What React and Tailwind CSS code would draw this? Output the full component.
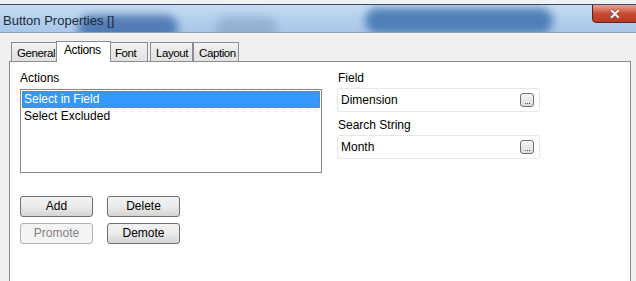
import React from 'react';

function Tab({ label, active, w }) {
    if (active) {
        return (
            <div className={'relative z-10 -mb-px h-[21px] pl-[7px] border border-b-0 border-[#898c95] bg-white text-[12px] tracking-[-0.4px] leading-[17px] text-black -mx-[2px] ' + w}>
                {label}
            </div>
        );
    }
    return (
        <div className={'mt-[2px] h-[19px] pl-[5px] border border-b-0 border-[#898c95] bg-gradient-to-b from-[#f2f2f2] to-[#e1e1e1] text-[11.5px] tracking-[-0.4px] leading-[20px] text-black whitespace-nowrap ' + w}>
            {label}
        </div>
    );
}

function Btn({ label, disabled }) {
    return (
        <div
            className={
                disabled
                    ? 'w-[73px] h-[21px] rounded-[3px] border border-[#adb2b5] bg-[#f4f4f4] text-[#838383] text-[12px] leading-[19px] text-center'
                    : 'w-[73px] h-[21px] rounded-[3px] border border-[#707070] bg-gradient-to-b from-[#f2f2f2] via-[#ebebeb] to-[#d4d4d4] text-black text-[12px] leading-[19px] text-center'
            }
        >
            {label}
        </div>
    );
}

function PickField({ value }) {
    return (
        <div className="w-[203px] h-[24px] border border-[#e3e9ef] rounded-[2px] bg-white flex items-center pl-[3px] pr-[5px]">
            <span className="flex-1 text-[12px] text-black">{value}</span>
            <div className="w-[14px] h-[14px] rounded-[3px] border border-[#707070] bg-gradient-to-b from-[#f6f6f6] to-[#dcdcdc] flex items-end justify-center pb-[2px] gap-[1px]">
                <span className="w-[1px] h-[1px] bg-[#c05050]"></span>
                <span className="w-[1px] h-[1px] bg-[#3050c0]"></span>
                <span className="w-[1px] h-[1px] bg-[#303030]"></span>
            </div>
        </div>
    );
}

export default function App() {
    return (
        <div className="w-[636px] h-[281px] bg-[#f0f0f0] overflow-hidden flex flex-col" style={{ fontFamily: '"Liberation Sans", Arial, sans-serif' }}>
            {/* title bar */}
            <div className="h-[4px] bg-[#eef1f5]"></div>
            <div className="relative h-[29px] border-t border-[#3f4b5c] border-b border-b-[#8aa3c0] bg-gradient-to-b from-[#c6dbf3] via-[#b5d0ee] to-[#a9c7ea] overflow-hidden">
                <div className="absolute left-[78px] top-[10px] w-[100px] h-[26px] rounded-full bg-[#3c6aa8] blur-[4px] opacity-80"></div>
                <div className="absolute left-[215px] top-[12px] w-[62px] h-[24px] rounded-full bg-[#8aa6c8] blur-[5px] opacity-70"></div>
                <div className="absolute left-[365px] top-[3px] w-[188px] h-[26px] rounded-full bg-[#3f72ae] blur-[4px] opacity-85"></div>
                <span className="absolute left-[3px] top-[8px] text-[13px] text-[#1d2a3a] leading-[15px]">Button Properties []</span>
                <div className="absolute left-[592px] -top-px w-[46px] h-[19px] rounded-bl-[4px] border border-[#5b2218] bg-gradient-to-b from-[#e7a596] via-[#c84a35] to-[#b73a24] flex items-center justify-center">
                    <span className="text-white font-bold text-[14px] leading-none" style={{ textShadow: '0 0 1px #333, 0 0 1px #333' }}>✕</span>
                </div>
            </div>

            {/* tabs */}
            <div className="flex items-end pl-[11px] pt-[9px] h-[28px]">
                <Tab label="General" w="w-[47px]" />
                <Tab label="Actions" w="w-[55px]" active />
                <Tab label="Font" w="w-[39px]" />
                <div className="w-[2px]"></div>
                <Tab label="Layout" w="w-[43px]" />
                <Tab label="Caption" w="w-[46px]" />
            </div>

            {/* panel */}
            <div className="ml-[9px] w-[622px] flex-1 border border-b-0 border-[#898c95] bg-white flex pt-[9px]">
                <div className="w-[320px] pl-[10px]">
                    <div className="text-[12px] text-black leading-[14px]">Actions</div>
                    <div className="mt-[4px] w-[302px] h-[84px] border border-[#828790] p-[1px]">
                        <div className="h-[17px] bg-[#3399ff] border border-dotted border-[#b07030] text-white text-[12px] leading-[15px] pl-[1px]">Select in Field</div>
                        <div className="h-[16px] text-black text-[12px] leading-[16px] pl-[2px]">Select Excluded</div>
                    </div>
                    <div className="mt-[23px] flex flex-col gap-[6px]">
                        <div className="flex gap-[14px]">
                            <Btn label="Add" />
                            <Btn label="Delete" />
                        </div>
                        <div className="flex gap-[14px]">
                            <Btn label="Promote" disabled />
                            <Btn label="Demote" />
                        </div>
                    </div>
                </div>
                <div className="pl-[7px]">
                    <div className="pl-[1px] text-[12px] text-black leading-[14px]">Field</div>
                    <div className="mt-[3px]">
                        <PickField value="Dimension" />
                    </div>
                    <div className="mt-[6px] pl-[1px] text-[12px] text-black leading-[14px]">Search String</div>
                    <div className="mt-[3px]">
                        <PickField value="Month" />
                    </div>
                </div>
            </div>
        </div>
    );
}
